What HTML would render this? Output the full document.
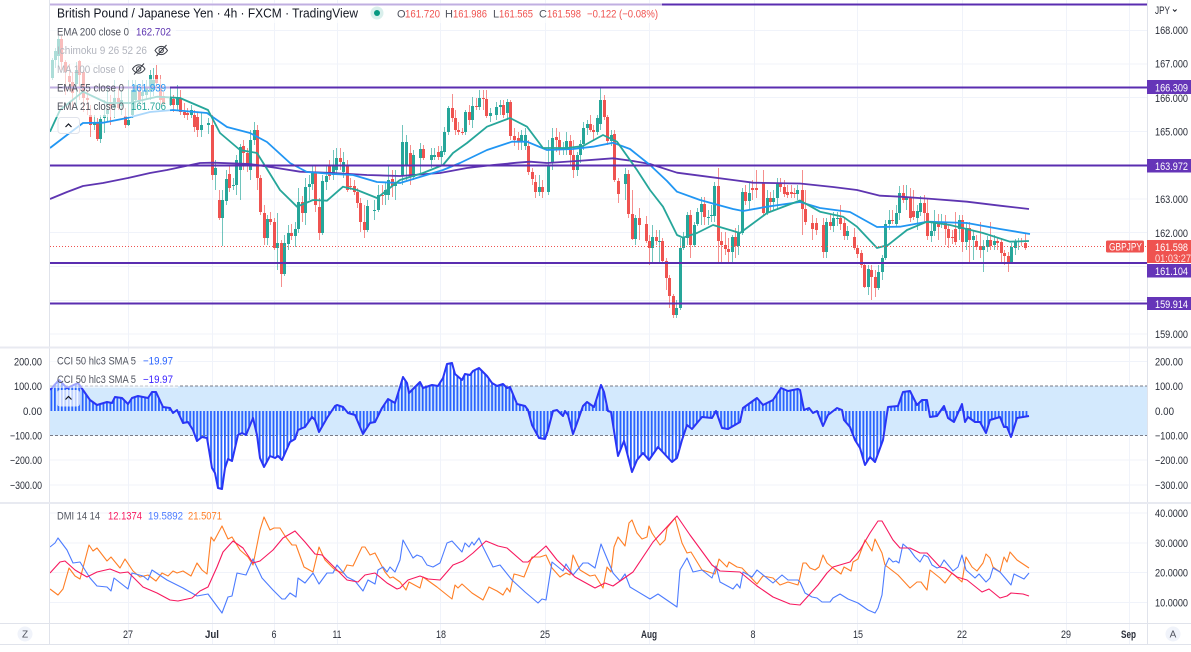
<!DOCTYPE html>
<html><head><meta charset="utf-8"><title>GBPJPY</title>
<style>
html,body{margin:0;padding:0;background:#fff;width:1191px;height:652px;overflow:hidden}
svg{display:block;font-family:"Liberation Sans",sans-serif;font-size:11px}
text{fill:#2a2e39}
.g{stroke:#f0f3fa;stroke-width:1;fill:none}
</style></head><body>
<svg width="1191" height="652" viewBox="0 0 1191 652" xmlns="http://www.w3.org/2000/svg">
<defs><pattern id="b" x="50.5" y="0" width="3.47" height="10" patternUnits="userSpaceOnUse"><rect width="1.8" height="10" fill="#2962ff"/></pattern></defs>

<!-- grid -->
<path class="g" d="M128.5 0V645M212.5 0V645M274.5 0V645M337.5 0V645M440.5 0V645M545.5 0V645M649.5 0V645M754.5 0V645M857.5 0V645M962.5 0V645M1066.5 0V645M1129.5 0V645"/>
<path class="g" d="M50 30.5H1147M50 64H1147M50 97.5H1147M50 131.5H1147M50 199H1147M50 232.5H1147M50 266.5H1147M50 300.5H1147M50 334H1147M50 361.5H1147M50 411H1147M50 460H1147M50 485H1147M50 513H1147M50 543H1147M50 572.5H1147M50 602.5H1147"/>

<!-- candles -->
<g fill="none" transform="translate(.5 0)">
<path stroke="#26a69a" stroke-opacity=".65" d="M52 58V80M55 48V68M58 36V66M76 62V110M94 115V130M100 115V143M104 100V133M107 85V122M114 80V118M121 90V115M128 80V126M132 80V118M135 80V110M142 80V105M146 80V100M150 70V100M153 68V96M170 88V106M177 85V110M191 105V118M201 112V137M208 118V134M215 160V190M222 190V246M226 170V205M233 178V190M236 155V195M240 144V200M250 130V180M254 122V145M267 215V245M277 213V270M284 235V276M288 225V250M295 222V247M298 188V233M305 178V225M309 175V200M312 165V190M322 175V235M326 165V190M333 150V180M336 148V175M343 152V178M367 200V232M374 200V220M378 185V212M385 182V205M388 165V200M395 170V200M402 125V185M406 135V180M413 150V180M420 143V175M431 148V168M434 148V160M441 146V165M444 127V155M448 106V135M465 110V135M472 97V128M479 90V110M490 108V122M496 102V120M500 100V115M507 99V120M521 130V150M525 128V150M539 175V196M548 140V195M552 128V170M563 142V155M566 132V155M577 152V176M580 140V163M583 122V150M587 120V135M597 115V135M600 88V130M611 130V146M625 168V200M635 215V245M652 225V262M659 230V262M676 300V318M680 238V310M683 232V250M687 212V245M694 222V247M697 208V226M701 197V225M708 210V225M711 205V222M714 182V222M732 235V262M738 225V255M742 188V235M749 183V210M767 190V215M773 190V210M777 178V210M797 185V200M826 218V258M833 212V232M837 212V226M847 226V240M868 265V295M878 265V290M882 255V280M885 220V260M889 210V230M896 205V226M899 186V220M906 185V210M917 205V230M920 196V216M931 222V242M934 210V236M941 214V228M959 215V240M966 222V250M973 230V260M983 240V272M987 236V252M994 235V250M1011 243V264M1015 239V255M1018 238V250"/>
<path stroke="#ef5350" stroke-opacity=".65" d="M61 36V70M65 60V95M69 64V90M72 72V110M79 60V100M83 70V112M87 90V115M90 105V137M97 118V141M110 95V125M118 88V110M125 108V128M139 85V105M156 65V88M160 75V105M163 92V106M173 95V112M180 90V115M184 103V118M187 108V120M194 110V132M197 112V137M212 115V180M219 190V220M229 165V192M243 140V170M247 148V172M257 125V190M260 175V215M264 205V245M270 212V225M274 218V250M281 240V287M291 224V240M302 196V222M315 165V212M319 198V240M329 160V180M340 148V170M347 160V192M350 178V190M354 180V195M357 188V208M360 198V232M364 205V238M382 185V205M392 170V197M410 145V185M423 145V160M438 146V160M452 94V122M455 110V135M458 122V135M462 128V135M469 105V125M476 98V110M483 90V110M486 90V118M503 100V118M510 100V140M514 128V146M518 132V150M528 140V175M532 168V185M535 175V198M542 180V198M556 128V152M559 132V155M570 135V165M573 140V178M590 115V132M593 125V140M604 95V120M607 115V145M614 130V182M618 178V203M628 170V218M632 190V240M639 208V240M646 216V243M649 235V265M656 230V245M662 238V262M666 258V290M669 275V308M673 294V318M690 210V258M704 197V225M718 168V262M721 232V262M725 232V255M728 238V262M735 228V258M745 185V205M752 180V200M756 170V198M763 170V215M770 192V212M780 178V192M784 180V197M787 185V198M791 185V198M794 188V198M802 170V235M805 190V225M812 215V240M816 218V235M823 218V258M830 215V230M840 205V230M844 218V240M854 228V250M857 245V258M861 250V268M864 262V288M871 265V300M875 270V297M892 210V224M903 185V203M910 188V222M913 190V220M924 195V222M927 198V240M938 214V240M945 215V245M948 225V248M952 230V244M955 212V245M962 215V252M969 222V262M976 235V250M980 222V258M990 222V250M997 238V250M1001 238V262M1004 250V265M1008 252V272M1021 238V246M1025 233V250"/>
<path stroke="#26a69a" stroke-width="3" d="M52 60V78M55 51V60M58 39V56M76 70V84M94 122V125M100 119V139M104 115V118M107 110V114M114 98V108M121 100V106M128 120V125M132 90V115M135 85V100M142 92V96M146 88V95M150 75V92M153 80V90M170 98V105M177 98V105M191 110V115M201 125V130M208 123V125M215 168V175M222 200V218M226 179V201M233 185V186M236 160V185M240 147V170M250 140V170M254 130V140M267 219V238M277 243V248M284 243V274M288 233V244M295 229V236M298 202V229M305 187V213M309 184V187M312 172V184M322 181V233M326 176V182M333 165V175M336 158V170M343 162V172M367 206V230M374 210V211M378 195V210M385 190V195M388 180V195M395 184V186M402 142V175M406 142V165M413 155V177M420 149V158M431 155V160M434 155V157M441 151V157M444 132V152M448 108V132M465 112V132M472 106V120M479 98V107M490 113V116M496 107V115M500 105V107M507 102V113M521 135V142M525 135V146M539 187V192M548 165V192M552 138V163M563 148V149M566 141V149M577 155V170M580 144V155M583 128V144M587 124V128M597 118V132M600 100V124M611 135V141M625 174V184M635 218V239M652 237V248M659 241V242M676 308V315M680 248V308M683 238V248M687 215V238M694 225V245M697 212V224M701 204V212M708 217V218M711 215V216M714 186V216M732 237V252M738 232V246M742 192V233M749 193V201M767 198V213M773 198V202M777 183V198M797 190V194M826 222V252M833 218V226M837 218V219M847 231V236M868 269V287M878 272V288M882 258V272M885 224V258M889 220V224M896 213V224M899 193V213M906 197V200M917 211V218M920 203V212M931 231V236M934 222V231M941 222V224M959 220V229M966 228V242M973 236V240M983 246V250M987 240V247M994 241V245M1011 247V262M1015 241V248M1018 241V242"/>
<path stroke="#ef5350" stroke-width="3" d="M61 39V62M65 62V72M69 76V82M72 82V93M79 61V75M83 72V98M87 98V100M90 115V125M97 123V139M110 102V106M118 98V108M125 116V125M139 90V100M156 75V83M160 85V100M163 96V104M173 99V105M180 98V112M184 112V115M187 113V115M194 115V127M197 117V130M212 125V175M219 200V218M229 174V188M243 146V153M247 153V165M257 130V178M260 178V212M264 213V238M270 219V222M274 222V248M281 243V274M291 233V236M302 202V213M315 173V205M319 207V233M329 166V176M340 158V162M347 165V190M350 186V187M354 186V192M357 192V203M360 203V222M364 222V230M382 195V196M392 179V186M410 153V177M423 149V158M438 152V157M452 108V118M455 118V130M458 130V132M462 132V133M469 112V120M476 106V107M483 98V99M486 99V116M503 105V115M510 102V136M514 136V140M518 138V142M528 146V172M532 172V179M535 182V192M542 187V192M556 137V140M559 140V150M570 141V155M573 155V170M590 124V130M593 130V132M604 100V117M607 117V141M614 134V180M618 181V194M628 174V214M632 214V239M639 218V225M646 224V241M649 241V248M656 237V241M662 241V261M666 261V278M669 278V296M673 296V315M690 215V245M704 204V217M718 186V241M721 241V245M725 245V249M728 249V252M735 237V246M745 192V201M752 188V190M756 188V190M763 183V213M770 198V202M780 183V187M784 187V194M787 192V195M791 192V194M794 193V194M802 190V209M805 209V222M812 223V229M816 223V230M823 225V252M830 222V226M840 218V224M844 223V236M854 237V248M857 248V254M861 253V265M864 265V287M871 270V277M875 277V288M892 220V221M903 193V200M910 198V218M913 211V217M924 203V213M927 213V236M938 224V227M945 222V229M948 229V238M952 237V238M955 229V242M962 220V242M969 228V240M976 241V247M980 246V250M990 240V246M997 241V243M1001 242V253M1004 253V256M1008 256V262M1021 241V242M1025 243V248"/>
</g>

<!-- EMAs -->
<g fill="none" stroke-width="1.8" stroke-linejoin="round">
<polyline stroke="#5e35b1" points="50,199 67,192 83,186 103,183 128,178 150,173 167,170 200,163 213,162.7 250,164 277,168 300,171.7 333,173 367,175 400,176 440,173 467,168 493,165 517,162.7 530,161.7 547,163 577,161 613,158.3 633,161 650,164 677,172.7 700,175.7 733,180 753,182.7 800,183.5 833,187 857,190 880,195.7 900,196.7 933,199 967,201.7 1000,205.7 1029,209"/>
<polyline stroke="#2196f3" points="50,148 67,135 83,123 103,122.7 127,118 150,112 173,110 207,113 227,127 250,133 267,142 290,163 307,172 333,174 353,175 377,182 400,183 443,170 460,163 487,150 512,141.7 527,141.7 547,150 573,149 593,146.7 613,142.7 630,149 650,165 667,181 677,191.7 700,200 733,209 743,211 767,206.7 800,202 820,208 850,212 877,227 900,226.7 927,221.7 967,223 1000,229 1030,234"/>
<polyline stroke="#26a69a" points="50,131.7 60,110 83,91.7 107,103 130,103 157,96.7 180,98 208,110 220,133 240,150 257,153 267,169 280,190 297,206.7 313,200 327,200.7 343,186.7 357,190 377,198 400,180 423,173 443,165 453,153 467,143 487,126.7 510,118 527,126.7 543,148 567,148 583,146 603,135 617,141.7 637,170 650,190 663,206.7 677,235 683,237.7 697,233 713,225 740,233 767,213 800,200.5 820,211.7 843,216.7 857,226.7 877,248 888,245 907,230 927,221.7 950,225 983,233 1010,241.7 1029,241"/>
</g>

<!-- horizontal levels -->
<g stroke="#5a2db0" stroke-width="2" fill="none">
<path d="M50 4.5H1147M50 87.5H1147M50 165.5H1147M50 263H1147M50 303.5H1147"/>
</g>
<path d="M50 246.5H1147" stroke="#ef5350" stroke-dasharray="1 2" fill="none"/>

<!-- legend veils -->
<g fill="#fff" fill-opacity=".62">
<rect x="50" y="3" width="612" height="20"/>
<rect x="50" y="24" width="126" height="19"/>
<rect x="50" y="43" width="123" height="18"/>
<rect x="50" y="61" width="99" height="18"/>
<rect x="50" y="79" width="120" height="19"/>
<rect x="50" y="98" width="120" height="19"/>
</g>
<rect x="58" y="117.5" width="21.5" height="16" rx="3" fill="#fff" fill-opacity=".7" stroke="#e0e3eb"/>
<path d="M65.5 127l3-3 3 3" fill="none" stroke="#131722" stroke-width="1.2"/>

<!-- legend text -->
<text x="57" y="17.5" font-size="12.5" textLength="301" lengthAdjust="spacingAndGlyphs" style="fill:#131722">British Pound / Japanese Yen · 4h · FXCM · TradingView</text>
<circle cx="377" cy="13" r="6.5" fill="#d9efec"/><circle cx="377" cy="13" r="3" fill="#089981"/>
<text x="397" y="17.5" style="fill:#50535e">O</text><text x="405" y="17.5" style="fill:#ef5350" textLength="35" lengthAdjust="spacingAndGlyphs">161.720</text>
<text x="445" y="17.5" style="fill:#50535e">H</text><text x="453" y="17.5" style="fill:#ef5350" textLength="34" lengthAdjust="spacingAndGlyphs">161.986</text>
<text x="493" y="17.5" style="fill:#50535e">L</text><text x="499" y="17.5" style="fill:#ef5350" textLength="34" lengthAdjust="spacingAndGlyphs">161.565</text>
<text x="539" y="17.5" style="fill:#50535e">C</text><text x="547" y="17.5" style="fill:#ef5350" textLength="34" lengthAdjust="spacingAndGlyphs">161.598</text>
<text x="587" y="17.5" style="fill:#ef5350" textLength="71" lengthAdjust="spacingAndGlyphs">−0.122 (−0.08%)</text>
<text x="57" y="35.5" textLength="72" lengthAdjust="spacingAndGlyphs" style="fill:#50535e">EMA 200 close 0</text><text x="136" y="35.5" textLength="35" lengthAdjust="spacingAndGlyphs" style="fill:#5e35b1">162.702</text>
<text x="57" y="54" textLength="90" lengthAdjust="spacingAndGlyphs" style="fill:#b2b5be">Ichimoku 9 26 52 26</text>
<g fill="none" stroke="#3a3d47" stroke-width="1"><path d="M155 50.5c3.5-5.5 9-5.5 12.5 0c-3.5 5.5-9 5.5-12.5 0z"/><circle cx="161.2" cy="50.5" r="2.2"/><path d="M156.5 56l10-11"/>
<path d="M132.5 69c3.5-5.5 9-5.5 12.5 0c-3.5 5.5-9 5.5-12.5 0z"/><circle cx="138.7" cy="69" r="2.2"/><path d="M134 74.5l10-11"/></g>
<text x="57" y="73" textLength="67" lengthAdjust="spacingAndGlyphs" style="fill:#b2b5be">MA 100 close 0</text>
<text x="57" y="91.5" textLength="67" lengthAdjust="spacingAndGlyphs" style="fill:#50535e">EMA 55 close 0</text><text x="131" y="91.5" textLength="35" lengthAdjust="spacingAndGlyphs" style="fill:#2196f3">161.939</text>
<text x="57" y="110" textLength="67" lengthAdjust="spacingAndGlyphs" style="fill:#50535e">EMA 21 close 0</text><text x="131" y="110" textLength="35" lengthAdjust="spacingAndGlyphs" style="fill:#26a69a">161.706</text>

<!-- CCI -->
<rect x="50" y="386" width="1097" height="49.5" fill="#d3e9fd"/>
<path d="M50 386H1147M50 435.5H1147" stroke="#787b86" stroke-dasharray="3 2" fill="none"/>
<polygon fill="url(#b)" points="50,411 50,390 59,380 67,388 78,383 83,390 90,400 97,405 107,402 112,403 115,397 122,398 128,404 132,398 138,396 148,398 152,392 156,392 163,407 170,408 173,413 177,410 183,423 188,422 193,430 197,441 202,437 207,438 212,468 215,473 218,488 222,489 225,468 228,459 232,461 238,435 242,433 246,435 253,418 257,435 260,458 264,467 270,456 275,458 278,456 282,460 290,442 295,439 298,430 305,427 312,417 315,420 319,432 327,418 335,406 337,405 343,407 348,413 355,415 363,434 370,423 375,422 382,408 388,399 395,403 400,387 403,377 407,383 409,393 415,387 420,382 423,388 432,385 438,386 443,378 447,364 452,363 455,374 462,380 465,374 470,375 473,371 479,368 487,376 492,383 497,386 503,384 507,388 510,387 517,404 525,406 528,410 532,425 539,438 545,439 548,430 553,411 557,410 563,416 565,411 568,415 573,434 577,423 583,406 587,402 594,407 601,385 604,392 608,411 611,412 618,456 624,441 632,472 637,460 643,453 649,460 658,447 672,462 677,458 682,440 687,425 692,429 702,417 712,418 716,411 722,428 728,429 740,422 743,408 757,398 763,405 773,400 781,388 788,391 798,389 800,390 804,410 809,408 813,413 817,411 823,426 828,415 837,408 842,410 844,420 850,427 855,440 860,448 865,465 870,457 875,462 883,440 888,407 898,406 903,392 910,391 917,405 922,400 927,400 930,417 937,416 944,406 948,418 954,422 962,404 965,422 968,417 975,422 980,422 986,433 990,420 1000,417 1004,427 1007,427 1011,437 1017,418 1023,417 1029,416 1029,411"/>
<polyline fill="none" stroke="#2a35f5" stroke-width="2" stroke-linejoin="round" points="50,390 59,380 67,388 78,383 83,390 90,400 97,405 107,402 112,403 115,397 122,398 128,404 132,398 138,396 148,398 152,392 156,392 163,407 170,408 173,413 177,410 183,423 188,422 193,430 197,441 202,437 207,438 212,468 215,473 218,488 222,489 225,468 228,459 232,461 238,435 242,433 246,435 253,418 257,435 260,458 264,467 270,456 275,458 278,456 282,460 290,442 295,439 298,430 305,427 312,417 315,420 319,432 327,418 335,406 337,405 343,407 348,413 355,415 363,434 370,423 375,422 382,408 388,399 395,403 400,387 403,377 407,383 409,393 415,387 420,382 423,388 432,385 438,386 443,378 447,364 452,363 455,374 462,380 465,374 470,375 473,371 479,368 487,376 492,383 497,386 503,384 507,388 510,387 517,404 525,406 528,410 532,425 539,438 545,439 548,430 553,411 557,410 563,416 565,411 568,415 573,434 577,423 583,406 587,402 594,407 601,385 604,392 608,411 611,412 618,456 624,441 632,472 637,460 643,453 649,460 658,447 672,462 677,458 682,440 687,425 692,429 702,417 712,418 716,411 722,428 728,429 740,422 743,408 757,398 763,405 773,400 781,388 788,391 798,389 800,390 804,410 809,408 813,413 817,411 823,426 828,415 837,408 842,410 844,420 850,427 855,440 860,448 865,465 870,457 875,462 883,440 888,407 898,406 903,392 910,391 917,405 922,400 927,400 930,417 937,416 944,406 948,418 954,422 962,404 965,422 968,417 975,422 980,422 986,433 990,420 1000,417 1004,427 1007,427 1011,437 1017,418 1023,417 1029,416"/>
<rect x="50" y="352" width="128" height="36" fill="#fff" fill-opacity=".55"/>
<rect x="57" y="390" width="23" height="16.5" rx="3" fill="#fff" fill-opacity=".7"/>
<path d="M65.5 399.5l3-3 3 3" fill="none" stroke="#131722" stroke-width="1.2"/>
<text x="57" y="364.5" textLength="79" lengthAdjust="spacingAndGlyphs" style="fill:#50535e">CCI 50 hlc3 SMA 5</text><text x="143" y="364.5" textLength="30" lengthAdjust="spacingAndGlyphs" style="fill:#2962ff">−19.97</text>
<text x="57" y="383" textLength="79" lengthAdjust="spacingAndGlyphs" style="fill:#50535e">CCI 50 hlc3 SMA 5</text><text x="143" y="383" textLength="30" lengthAdjust="spacingAndGlyphs" style="fill:#3a22ff">−19.97</text>

<!-- DMI -->
<g fill="none" stroke-width="1.1" stroke-linejoin="round">
<polyline stroke="#ff7f27" points="50,589 58,595 63,589 69,568 75,576 80,579 89,545 93,551 97,548 107,561 111,557 120,568 125,559 133,571 140,577 148,575 156,581 162,573 168,576 173,571 177,573 183,571 191,576 197,563 202,570 207,574 211,537 214,541 222,526 228,539 232,537 240,550 248,557 253,565 260,530 264,517 270,530 274,528 280,528 285,536 292,545 296,545 304,567 313,572 319,547 325,560 335,570 343,573 347,565 353,566 362,547 365,547 370,555 375,553 385,572 390,578 393,577 400,582 406,590 409,582 420,588 423,577 437,587 452,599 455,585 458,588 462,584 472,593 483,600 489,587 497,591 503,595 507,588 510,592 514,574 518,575 524,577 532,557 540,557 546,555 552,568 560,577 566,573 570,575 573,555 580,570 590,576 595,575 603,588 607,567 611,572 614,547 618,537 625,546 629,523 632,520 637,533 642,539 647,537 649,526 652,533 660,545 665,540 667,528 675,518 682,543 687,553 691,552 702,570 715,574 719,559 727,567 729,562 737,567 742,568 757,584 763,576 773,578 780,585 788,582 798,585 800,577 803,563 806,563 810,568 815,570 819,567 823,555 827,563 833,568 841,574 844,567 851,571 853,562 858,559 865,540 872,551 875,539 882,553 885,565 898,575 910,588 917,582 921,582 927,590 930,570 940,578 945,583 952,573 962,582 966,557 972,567 977,571 983,563 986,554 990,558 993,567 1000,572 1004,557 1007,562 1010,552 1017,560 1023,564 1029,568"/>
<polyline stroke="#4d7cff" points="50,547 55,543 58,538 67,550 73,563 80,562 90,578 97,586 107,587 111,591 114,578 128,589 132,573 143,576 148,580 152,570 167,580 183,588 197,596 208,594 222,613 228,597 232,596 237,573 246,575 253,559 262,578 273,590 282,599 285,599 290,593 296,597 298,578 305,583 313,573 319,584 327,573 333,573 337,565 347,577 355,581 363,591 368,580 375,584 378,570 383,567 387,572 390,567 395,572 400,560 403,540 413,558 417,555 422,557 427,565 433,567 440,563 447,543 452,541 462,552 465,543 469,547 472,542 474,545 479,538 483,547 493,567 500,565 512,580 525,592 538,603 542,599 546,600 552,562 563,571 566,564 573,575 583,563 588,563 595,568 601,544 613,573 620,581 625,574 630,587 650,599 658,594 677,607 680,570 687,558 693,572 702,570 712,578 716,566 720,582 733,589 737,584 740,588 743,572 752,577 757,570 773,583 782,575 788,580 798,580 800,582 805,593 812,597 817,598 822,602 830,602 833,598 840,594 848,599 858,603 868,610 875,613 878,608 882,595 885,567 889,558 893,562 896,561 899,563 903,544 910,550 915,557 920,562 924,555 928,557 932,565 937,568 940,567 944,560 953,571 958,567 962,555 966,570 975,578 979,574 986,582 990,578 993,568 1000,572 1011,585 1014,574 1024,579 1029,573"/>
<polyline stroke="#f7195f" points="50,573 60,562 65,561 75,570 87,577 97,572 110,569 120,573 128,572 143,587 157,593 170,600 178,601 192,598 200,591 208,587 217,567 223,552 233,541 243,548 253,563 260,561 273,550 283,538 295,531 305,542 315,554 322,555 335,568 347,580 358,582 365,575 375,573 387,583 397,589 400,588 408,580 420,576 428,579 440,580 453,565 463,561 473,553 486,541 498,546 507,548 523,562 528,562 546,546 557,560 575,577 595,588 605,583 613,586 633,572 653,542 677,516 690,535 712,565 720,571 740,572 757,586 773,597 790,604 800,605 818,585 827,573 833,567 850,562 860,550 870,533 878,521 882,521 893,540 900,548 910,548 920,553 927,553 940,567 945,568 957,577 967,580 982,592 989,589 1000,598 1007,596 1011,593 1023,594 1029,596"/>
</g>
<text x="57" y="519.5" textLength="43" lengthAdjust="spacingAndGlyphs" style="fill:#50535e">DMI 14 14</text>
<text x="108" y="519.5" textLength="34" lengthAdjust="spacingAndGlyphs" style="fill:#f7195f">12.1374</text>
<text x="148" y="519.5" textLength="35" lengthAdjust="spacingAndGlyphs" style="fill:#4d7cff">19.5892</text>
<text x="188" y="519.5" textLength="34" lengthAdjust="spacingAndGlyphs" style="fill:#ff7f27">21.5071</text>

<!-- frame -->
<rect x="0" y="645" width="1191" height="7" fill="#fff"/>
<g stroke="#e0e3eb" fill="none">
<path d="M49.5 0V645M1147.5 0V645M0 623.5H1191M0 644.5H1191"/>
<path d="M0 347.5H1191M0 503H1191" stroke-width="2" stroke="#e8eaf1"/>
</g>

<!-- right axis -->
<g>
<text x="1155" y="14" textLength="15" lengthAdjust="spacingAndGlyphs">JPY</text><path d="M1173 9.5l1.8 1.8 1.8-1.8" fill="none" stroke="#131722"/>
<text x="1155" y="34" textLength="33" lengthAdjust="spacingAndGlyphs">168.000</text>
<text x="1155" y="67.5" textLength="33" lengthAdjust="spacingAndGlyphs">167.000</text>
<text x="1155" y="102" textLength="33" lengthAdjust="spacingAndGlyphs">166.000</text>
<text x="1155" y="135.5" textLength="33" lengthAdjust="spacingAndGlyphs">165.000</text>
<text x="1155" y="203" textLength="33" lengthAdjust="spacingAndGlyphs">163.000</text>
<text x="1155" y="237" textLength="33" lengthAdjust="spacingAndGlyphs">162.000</text>
<text x="1155" y="338" textLength="33" lengthAdjust="spacingAndGlyphs">159.000</text>
<text x="1155" y="365.5" textLength="28" lengthAdjust="spacingAndGlyphs">200.00</text>
<text x="1155" y="390" textLength="28" lengthAdjust="spacingAndGlyphs">100.00</text>
<text x="1155" y="415" textLength="19" lengthAdjust="spacingAndGlyphs">0.00</text>
<text x="1155" y="439.5" textLength="33" lengthAdjust="spacingAndGlyphs">−100.00</text>
<text x="1155" y="464" textLength="33" lengthAdjust="spacingAndGlyphs">−200.00</text>
<text x="1155" y="489" textLength="33" lengthAdjust="spacingAndGlyphs">−300.00</text>
<text x="1155" y="517" textLength="33" lengthAdjust="spacingAndGlyphs">40.0000</text>
<text x="1155" y="547" textLength="33" lengthAdjust="spacingAndGlyphs">30.0000</text>
<text x="1155" y="576.5" textLength="33" lengthAdjust="spacingAndGlyphs">20.0000</text>
<text x="1155" y="606.5" textLength="33" lengthAdjust="spacingAndGlyphs">10.0000</text>
</g>
<!-- left axis CCI -->
<g>
<text x="14" y="365.5" textLength="28" lengthAdjust="spacingAndGlyphs">200.00</text>
<text x="14" y="390" textLength="28" lengthAdjust="spacingAndGlyphs">100.00</text>
<text x="23" y="415" textLength="19" lengthAdjust="spacingAndGlyphs">0.00</text>
<text x="10" y="439.5" textLength="32" lengthAdjust="spacingAndGlyphs">−100.00</text>
<text x="10" y="464" textLength="32" lengthAdjust="spacingAndGlyphs">−200.00</text>
<text x="10" y="489" textLength="32" lengthAdjust="spacingAndGlyphs">−300.00</text>
</g>

<!-- price labels -->
<rect x="1147" y="80" width="44" height="14" fill="#6535b8"/><text x="1155" y="91.5" textLength="33" lengthAdjust="spacingAndGlyphs" style="fill:#fff">166.309</text>
<rect x="1147" y="159" width="44" height="13.5" fill="#6535b8"/><text x="1155" y="170" textLength="33" lengthAdjust="spacingAndGlyphs" style="fill:#fff">163.972</text>
<rect x="1147" y="264" width="44" height="13.5" fill="#6535b8"/><text x="1155" y="275" textLength="33" lengthAdjust="spacingAndGlyphs" style="fill:#fff">161.104</text>
<rect x="1147" y="297" width="44" height="13" fill="#6535b8"/><text x="1155" y="308" textLength="33" lengthAdjust="spacingAndGlyphs" style="fill:#fff">159.914</text>
<rect x="1147" y="240" width="44" height="23" fill="#ef5350"/>
<text x="1155" y="251" textLength="33" lengthAdjust="spacingAndGlyphs" style="fill:#fff">161.598</text>
<text x="1155" y="262" textLength="36" lengthAdjust="spacingAndGlyphs" style="fill:#fde0df">01:03:27</text>
<rect x="1106" y="240.5" width="38" height="12" rx="1.5" fill="#ef5350"/>
<text x="1109" y="250.5" textLength="33" lengthAdjust="spacingAndGlyphs" style="fill:#fff">GBPJPY</text>

<!-- bottom axis -->
<g>
<text x="123" y="638" textLength="10" lengthAdjust="spacingAndGlyphs">27</text>
<text x="205" y="638" font-weight="bold" textLength="14" lengthAdjust="spacingAndGlyphs">Jul</text>
<text x="271.5" y="638" textLength="5" lengthAdjust="spacingAndGlyphs">6</text>
<text x="332.5" y="638" textLength="9" lengthAdjust="spacingAndGlyphs">11</text>
<text x="436" y="638" textLength="10" lengthAdjust="spacingAndGlyphs">18</text>
<text x="540" y="638" textLength="10" lengthAdjust="spacingAndGlyphs">25</text>
<text x="641" y="638" font-weight="bold" textLength="16" lengthAdjust="spacingAndGlyphs">Aug</text>
<text x="750.5" y="638" textLength="5" lengthAdjust="spacingAndGlyphs">8</text>
<text x="853" y="638" textLength="10" lengthAdjust="spacingAndGlyphs">15</text>
<text x="957" y="638" textLength="10" lengthAdjust="spacingAndGlyphs">22</text>
<text x="1061" y="638" textLength="10" lengthAdjust="spacingAndGlyphs">29</text>
<text x="1121" y="638" font-weight="bold" textLength="15" lengthAdjust="spacingAndGlyphs">Sep</text>
</g>
<circle cx="25" cy="634" r="7.5" fill="#f0f3fa"/><text x="25" y="637.5" text-anchor="middle" font-size="10" style="fill:#50535e">Z</text>
<circle cx="1173" cy="634" r="7.5" fill="#f0f3fa"/><text x="1173" y="637.5" text-anchor="middle" font-size="10" style="fill:#50535e">A</text>
</svg>
</body></html>
